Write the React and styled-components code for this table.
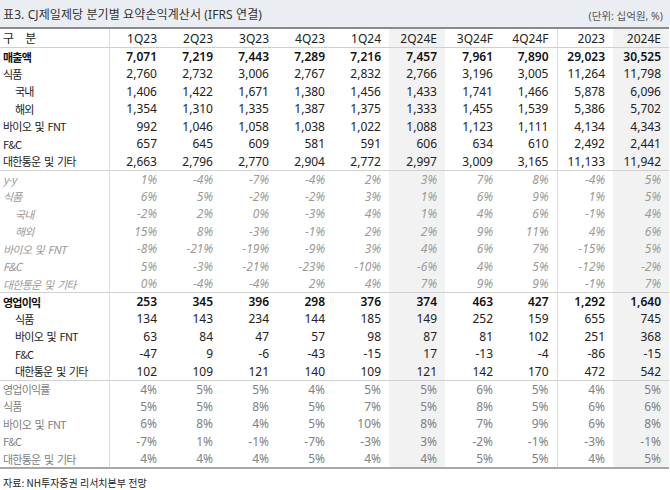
import React from 'react';
import styled, { createGlobalStyle } from 'styled-components';

const GlobalStyle = createGlobalStyle`
    body {
        margin: 0;
        background: #fff;
        font-family: "Noto Sans", "Noto Sans CJK KR", sans-serif;
    }
`;

const Page = styled.div`
    width: 670px;
    height: 490px;
    overflow: hidden;
    background: #fff;
`;

const TitleBar = styled.div`
    height: 27px;
    background: #eaeef3;
    display: flex;
    justify-content: space-between;
    align-items: center;
    padding: 0 7px 0 3px;
    box-sizing: border-box;
`;

const Title = styled.h1`
    margin: 0;
    font-size: 12px;
    font-weight: 400;
    color: #333;
    letter-spacing: 0.1px;
`;

const Unit = styled.span`
    font-size: 10.5px;
    color: #555;
    margin-top: 4px;
`;

const Table = styled.table`
    width: 669px;
    border-collapse: collapse;
    table-layout: fixed;
    border-top: 2px solid #8a8a8a;
    border-bottom: 2px solid #a8a8a8;
`;

const HeadCell = styled.th`
    height: 18px;
    padding: 0 8px 0 3px;
    font-size: 12px;
    font-weight: 400;
    color: #222;
    text-align: ${(p) => (p.$label ? 'left' : 'right')};
    background: ${(p) => (p.$shade ? '#f2f2f2' : 'transparent')};
    border-bottom: 1px solid #cfcfcf;
    border-right: ${(p) => (p.$divider ? '1px solid #dcdcdc' : 'none')};
    letter-spacing: ${(p) => (p.$label ? '4px' : '0')};
    white-space: nowrap;
`;

const Row = styled.tr`
    height: 17.5px;
    border-top: ${(p) => (p.$sep ? '1px solid #d0d0d0' : 'none')};
`;

const tone = {
    total: { color: '#111', weight: 700, style: 'normal' },
    normal: { color: '#222', weight: 400, style: 'normal' },
    growth: { color: '#9a9a9a', weight: 400, style: 'italic' },
    margin: { color: '#808080', weight: 400, style: 'normal' },
};

const Label = styled.td`
    padding: 0 0 0 ${(p) => (p.$indent ? 15 : 3)}px;
    font-family: "Noto Sans CJK KR", "Noto Sans", sans-serif;
    font-size: 11px;
    letter-spacing: -0.8px;
    word-spacing: 2px;
    white-space: nowrap;
    color: ${(p) => tone[p.$kind].color};
    font-weight: ${(p) => tone[p.$kind].weight};
    font-style: ${(p) => tone[p.$kind].style};
    border-right: 1px solid #dcdcdc;
`;

const Value = styled.td`
    padding: 0 8px 0 0;
    text-align: right;
    font-size: 12px;
    white-space: nowrap;
    color: ${(p) => tone[p.$kind].color};
    font-weight: ${(p) => (p.$kind === 'total' ? 600 : 400)};
    font-style: ${(p) => tone[p.$kind].style};
    background: ${(p) => (p.$shade ? '#f2f2f2' : 'transparent')};
    border-right: ${(p) => (p.$divider ? '1px solid #dcdcdc' : 'none')};
`;

const Source = styled.p`
    margin: 6px 0 0 3px;
    font-family: "Noto Sans CJK KR", sans-serif;
    font-size: 10px;
    color: #222;
`;

const columns = ['1Q23', '2Q23', '3Q23', '4Q23', '1Q24', '2Q24E', '3Q24F', '4Q24F', '2023', '2024E'];
const shaded = [5, 9];
const dividers = [7];

const rows = [
    { label: '매출액', kind: 'total', values: ['7,071', '7,219', '7,443', '7,289', '7,216', '7,457', '7,961', '7,890', '29,023', '30,525'] },
    { label: '식품', kind: 'normal', values: ['2,760', '2,732', '3,006', '2,767', '2,832', '2,766', '3,196', '3,005', '11,264', '11,798'] },
    { label: '국내', kind: 'normal', indent: true, values: ['1,406', '1,422', '1,671', '1,380', '1,456', '1,433', '1,741', '1,466', '5,878', '6,096'] },
    { label: '해외', kind: 'normal', indent: true, values: ['1,354', '1,310', '1,335', '1,387', '1,375', '1,333', '1,455', '1,539', '5,386', '5,702'] },
    { label: '바이오 및 FNT', kind: 'normal', values: ['992', '1,046', '1,058', '1,038', '1,022', '1,088', '1,123', '1,111', '4,134', '4,343'] },
    { label: 'F&C', kind: 'normal', values: ['657', '645', '609', '581', '591', '606', '634', '610', '2,492', '2,441'] },
    { label: '대한통운 및 기타', kind: 'normal', values: ['2,663', '2,796', '2,770', '2,904', '2,772', '2,997', '3,009', '3,165', '11,133', '11,942'] },
    { label: 'y-y', kind: 'growth', sep: true, values: ['1%', '-4%', '-7%', '-4%', '2%', '3%', '7%', '8%', '-4%', '5%'] },
    { label: '식품', kind: 'growth', values: ['6%', '5%', '-2%', '-2%', '3%', '1%', '6%', '9%', '1%', '5%'] },
    { label: '국내', kind: 'growth', indent: true, values: ['-2%', '2%', '0%', '-3%', '4%', '1%', '4%', '6%', '-1%', '4%'] },
    { label: '해외', kind: 'growth', indent: true, values: ['15%', '8%', '-3%', '-1%', '2%', '2%', '9%', '11%', '4%', '6%'] },
    { label: '바이오 및 FNT', kind: 'growth', values: ['-8%', '-21%', '-19%', '-9%', '3%', '4%', '6%', '7%', '-15%', '5%'] },
    { label: 'F&C', kind: 'growth', values: ['5%', '-3%', '-21%', '-23%', '-10%', '-6%', '4%', '5%', '-12%', '-2%'] },
    { label: '대한통운 및 기타', kind: 'growth', values: ['0%', '-4%', '-4%', '2%', '4%', '7%', '9%', '9%', '-1%', '7%'] },
    { label: '영업이익', kind: 'total', sep: true, values: ['253', '345', '396', '298', '376', '374', '463', '427', '1,292', '1,640'] },
    { label: '식품', kind: 'normal', indent: true, values: ['134', '143', '234', '144', '185', '149', '252', '159', '655', '745'] },
    { label: '바이오 및 FNT', kind: 'normal', indent: true, values: ['63', '84', '47', '57', '98', '87', '81', '102', '251', '368'] },
    { label: 'F&C', kind: 'normal', indent: true, values: ['-47', '9', '-6', '-43', '-15', '17', '-13', '-4', '-86', '-15'] },
    { label: '대한통운 및 기타', kind: 'normal', indent: true, values: ['102', '109', '121', '140', '109', '121', '142', '170', '472', '542'] },
    { label: '영업이익률', kind: 'margin', sep: true, values: ['4%', '5%', '5%', '4%', '5%', '5%', '6%', '5%', '4%', '5%'] },
    { label: '식품', kind: 'margin', values: ['5%', '5%', '8%', '5%', '7%', '5%', '8%', '5%', '6%', '6%'] },
    { label: '바이오 및 FNT', kind: 'margin', values: ['6%', '8%', '4%', '5%', '10%', '8%', '7%', '9%', '6%', '8%'] },
    { label: 'F&C', kind: 'margin', values: ['-7%', '1%', '-1%', '-7%', '-3%', '3%', '-2%', '-1%', '-3%', '-1%'] },
    { label: '대한통운 및 기타', kind: 'margin', values: ['4%', '4%', '4%', '5%', '4%', '4%', '5%', '5%', '4%', '5%'] },
];

const App = () => (
    <Page>
        <GlobalStyle />
        <TitleBar>
            <Title>표3. CJ제일제당 분기별 요약손익계산서 (IFRS 연결)</Title>
            <Unit>(단위: 십억원, %)</Unit>
        </TitleBar>
        <Table>
            <colgroup>
                <col style={{ width: 109 }} />
                {columns.map((c) => (
                    <col key={c} style={{ width: 56 }} />
                ))}
            </colgroup>
            <thead>
                <tr>
                    <HeadCell $label $divider>구 분</HeadCell>
                    {columns.map((c, i) => (
                        <HeadCell key={c} $shade={shaded.includes(i)} $divider={dividers.includes(i)}>
                            {c}
                        </HeadCell>
                    ))}
                </tr>
            </thead>
            <tbody>
                {rows.map((r, ri) => (
                    <Row key={ri} $sep={r.sep}>
                        <Label $kind={r.kind} $indent={r.indent}>{r.label}</Label>
                        {r.values.map((v, i) => (
                            <Value
                                key={i}
                                $kind={r.kind}
                                $shade={shaded.includes(i)}
                                $divider={dividers.includes(i)}
                            >
                                {v}
                            </Value>
                        ))}
                    </Row>
                ))}
            </tbody>
        </Table>
        <Source>자료: NH투자증권 리서치본부 전망</Source>
    </Page>
);

export default App;
